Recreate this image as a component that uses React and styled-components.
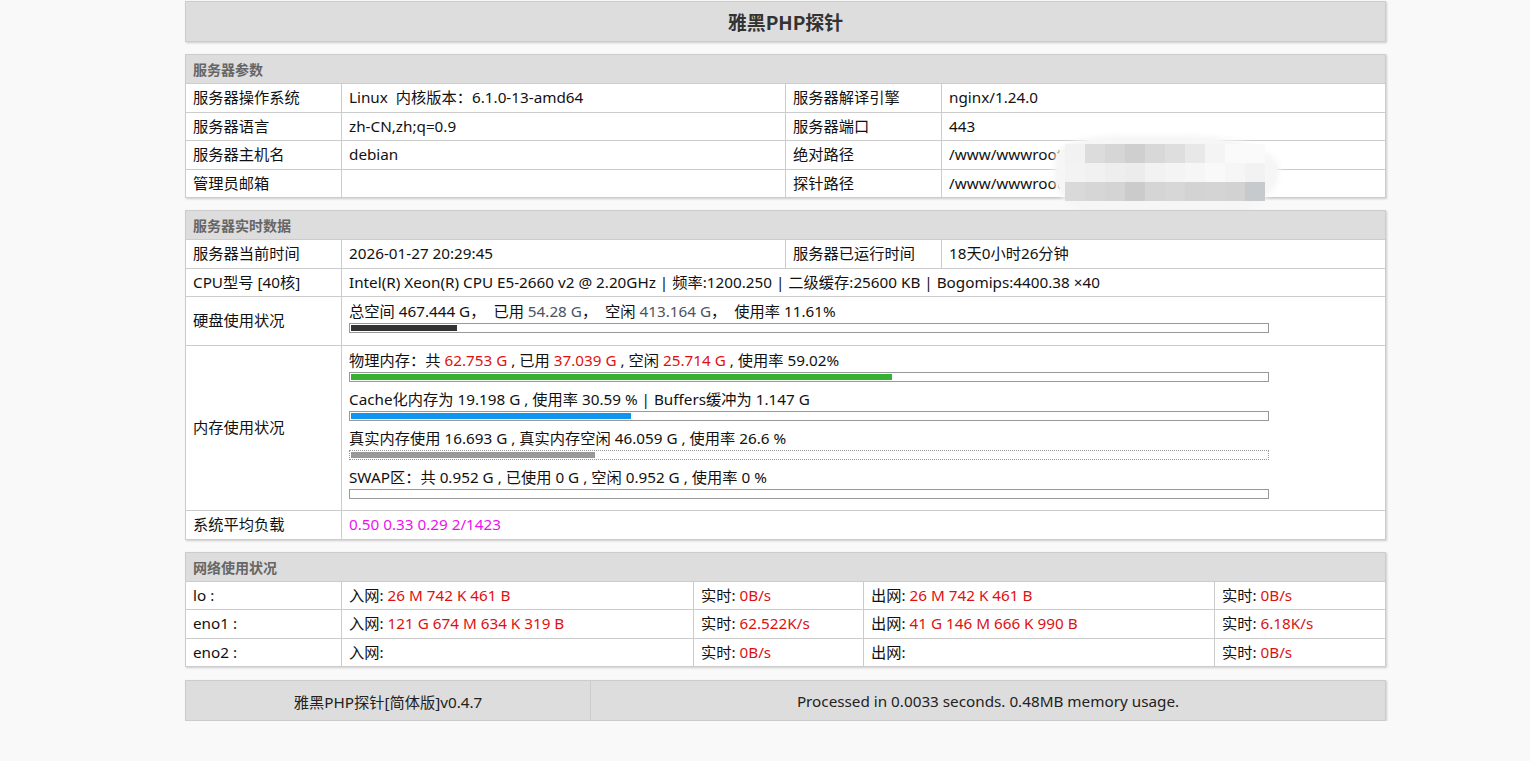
import React from "react";
import styled, { createGlobalStyle } from "styled-components";

const serverRows = [
  ["服务器操作系统", "Linux\u00a0 内核版本：6.1.0-13-amd64", "服务器解译引擎", "nginx/1.24.0"],
  ["服务器语言", "zh-CN,zh;q=0.9", "服务器端口", "443"],
  ["服务器主机名", "debian", "绝对路径", "/www/wwwroot/"],
  ["管理员邮箱", "", "探针路径", "/www/wwwroot/"],
];

const nets = [
  { name: "lo :", rx: "26 M 742 K 461 B", rxRate: "0B/s", tx: "26 M 742 K 461 B", txRate: "0B/s" },
  { name: "eno1 :", rx: "121 G 674 M 634 K 319 B", rxRate: "62.522K/s", tx: "41 G 146 M 666 K 990 B", txRate: "6.18K/s" },
  { name: "eno2 :", rx: "", rxRate: "0B/s", tx: "", txRate: "0B/s" },
];

// mosaic blocks covering the private part of the paths
const mosaic = [
  ["#f2f2f2", "#dcdcdc", "#d6d6d6", "#cfcfcf", "#d8d8d8", "#dedede", "#e8e8e8", "#f4f4f4", "#fafafa", "#fafafa"],
  ["#f3f3f3", "#f1f1f1", "#eeeeee", "#ececec", "#f2f2f2", "#f4f4f4", "#f6f6f6", "#f9f9f9", "#f6f6f6", "#f2f2f2"],
  ["#d9d9d9", "#d6d6d6", "#d4d4d4", "#cbcbcb", "#d5d5d5", "#d7d7d7", "#d3d3d3", "#d4d4d4", "#d2d2d2", "#c6cacd"],
];

const App = () => {
  const memory = [
    {
      key: "phys",
      pct: 59.02,
      color: "#36b233",
      text: (
        <>
          物理内存：共 <Red>62.753 G</Red> , 已用 <Red>37.039 G</Red> , 空闲 <Red>25.714 G</Red> , 使用率 59.02%
        </>
      ),
    },
    {
      key: "cache",
      pct: 30.59,
      color: "#1096ee",
      text: <>Cache化内存为 19.198 G , 使用率 30.59 % | Buffers缓冲为 1.147 G</>,
    },
    {
      key: "real",
      pct: 26.6,
      color: "#999999",
      dotted: true,
      text: <>真实内存使用 16.693 G , 真实内存空闲 46.059 G , 使用率 26.6 %</>,
    },
    {
      key: "swap",
      pct: 0,
      color: "#999999",
      text: <>SWAP区：共 0.952 G , 已使用 0 G , 空闲 0.952 G , 使用率 0 %</>,
    },
  ];

  return (
    <>
      <GlobalStyle />
      <Page>
        <TitleBox>雅黑PHP探针</TitleBox>

        <Panel>
          <Table>
            <colgroup>
              <col style={{ width: 156 }} />
              <col style={{ width: 444 }} />
              <col style={{ width: 156 }} />
              <col />
            </colgroup>
            <tbody>
              <tr>
                <HeadCell colSpan={4}>服务器参数</HeadCell>
              </tr>
              {serverRows.map((r) => (
                <tr key={r[0]}>
                  <Cell>{r[0]}</Cell>
                  <Cell>{r[1]}</Cell>
                  <Cell>{r[2]}</Cell>
                  <Cell>{r[3]}</Cell>
                </tr>
              ))}
            </tbody>
          </Table>
          <Smudge>
            {mosaic.map((row, i) => (
              <MosaicRow key={i}>
                {row.map((c, j) => (
                  <Tile key={j} $shade={c} />
                ))}
              </MosaicRow>
            ))}
          </Smudge>
        </Panel>

        <Panel>
          <Table>
            <colgroup>
              <col style={{ width: 156 }} />
              <col style={{ width: 444 }} />
              <col style={{ width: 156 }} />
              <col />
            </colgroup>
            <tbody>
              <tr>
                <HeadCell colSpan={4}>服务器实时数据</HeadCell>
              </tr>
              <tr>
                <Cell>服务器当前时间</Cell>
                <Cell>2026-01-27 20:29:45</Cell>
                <Cell>服务器已运行时间</Cell>
                <Cell>18天0小时26分钟</Cell>
              </tr>
              <tr>
                <Cell>CPU型号 [40核]</Cell>
                <Cell colSpan={3}>
                  Intel(R) Xeon(R) CPU E5-2660 v2 @ 2.20GHz | 频率:1200.250 | 二级缓存:25600 KB | Bogomips:4400.38 ×40
                </Cell>
              </tr>
              <tr>
                <Cell>硬盘使用状况</Cell>
                <Cell colSpan={3} $tall>
                  <Block $first>
                    总空间 467.444 G，&nbsp; 已用 <Muted>54.28 G</Muted>，&nbsp; 空闲 <Muted>413.164 G</Muted>，&nbsp; 使用率 11.61%
                    <Bar>
                      <Fill $color="#333333" style={{ width: "11.61%" }} />
                    </Bar>
                  </Block>
                </Cell>
              </tr>
              <tr>
                <Cell>内存使用状况</Cell>
                <Cell colSpan={3} $tall>
                  {memory.map((m, i) => (
                    <Block key={m.key} $first={i === 0}>
                      {m.text}
                      <Bar $dotted={m.dotted}>
                        <Fill $color={m.color} style={{ width: `${m.pct}%` }} />
                      </Bar>
                    </Block>
                  ))}
                </Cell>
              </tr>
              <tr>
                <Cell>系统平均负载</Cell>
                <Cell colSpan={3}>
                  <Load>0.50 0.33 0.29 2/1423</Load>
                </Cell>
              </tr>
            </tbody>
          </Table>
        </Panel>

        <Panel>
          <Table>
            <colgroup>
              <col style={{ width: 156 }} />
              <col style={{ width: 352 }} />
              <col style={{ width: 170 }} />
              <col style={{ width: 351 }} />
              <col />
            </colgroup>
            <tbody>
              <tr>
                <HeadCell colSpan={5}>网络使用状况</HeadCell>
              </tr>
              {nets.map((n) => (
                <tr key={n.name}>
                  <Cell>{n.name}</Cell>
                  <Cell>
                    入网: <Red>{n.rx}</Red>
                  </Cell>
                  <Cell>
                    实时: <Red>{n.rxRate}</Red>
                  </Cell>
                  <Cell>
                    出网: <Red>{n.tx}</Red>
                  </Cell>
                  <Cell>
                    实时: <Red>{n.txRate}</Red>
                  </Cell>
                </tr>
              ))}
            </tbody>
          </Table>
        </Panel>

        <Footer>
          <FootCell $w="404px">雅黑PHP探针[简体版]v0.4.7</FootCell>
          <FootCell>Processed in 0.0033 seconds. 0.48MB memory usage.</FootCell>
        </Footer>
      </Page>
    </>
  );
};

export default App;

/* ================== STYLES ================== */

const GlobalStyle = createGlobalStyle`
  html, body {
    margin: 0;
    padding: 0;
    background: #f9f9f9;
  }
  body {
    font-family: "Noto Sans", "Noto Sans CJK SC", sans-serif;
    font-size: 15.25px;
    color: #111;
  }
`;

const Page = styled.div`
  width: 1201px;
  margin-left: 185px;
  padding-top: 1px;
  display: flex;
  flex-direction: column;
  gap: 12px;
`;

const TitleBox = styled.div`
  height: 39px;
  line-height: 39px;
  background: #dddddd;
  border: 1px solid #cccccc;
  box-shadow: 1px 1px 2px rgba(0, 0, 0, 0.18);
  text-align: center;
  font-family: "Noto Sans CJK SC", sans-serif;
  font-size: 19px;
  font-weight: 700;
  color: #333;
`;

const Panel = styled.div`
  position: relative;
  box-shadow: 1px 1px 2px rgba(0, 0, 0, 0.18);
`;

const Table = styled.table`
  width: 100%;
  table-layout: fixed;
  border-collapse: collapse;
  background: #fff;
  border: 1px solid #cccccc;
`;

const HeadCell = styled.td`
  background: #dddddd;
  border: 1px solid #cccccc;
  padding: 4px 8px 4px 7px;
  height: 20px;
  line-height: 20px;
  font-family: "Noto Sans CJK SC", sans-serif;
  font-weight: 700;
  color: #666;
  font-size: 14px;
`;

const Cell = styled.td`
  border: 1px solid #cccccc;
  padding: ${(p) => (p.$tall ? "3px 8px 11.5px 7px" : "4px 8px 4px 7px")};
  height: 19.5px;
  line-height: 19.5px;
  vertical-align: middle;
  white-space: nowrap;
  overflow: hidden;
`;

const Block = styled.div`
  padding-top: ${(p) => (p.$first ? "0" : "6px")};
  line-height: 22px;
`;

const Bar = styled.div`
  width: 916px;
  height: 6px;
  padding: 1px;
  margin-top: 1px;
  border: 1px ${(p) => (p.$dotted ? "dotted" : "solid")} #999;
  background: #fff;
`;

const Fill = styled.div`
  height: 100%;
  background: ${(p) => p.$color};
`;

const Red = styled.span`
  color: #dd1111;
`;

const Muted = styled.span`
  color: #4c5262;
`;

const Load = styled.span`
  color: #ee11ee;
`;

const Footer = styled.div`
  display: flex;
  height: 39px;
  margin-top: 1px;
  background: #dddddd;
  border: 1px solid #cccccc;
  box-shadow: 1px 1px 2px rgba(0, 0, 0, 0.18);
`;

const FootCell = styled.div`
  flex: ${(p) => (p.$w ? `0 0 ${p.$w}` : "1")};
  display: flex;
  align-items: center;
  justify-content: center;
  color: #222;
  & + & {
    border-left: 1px solid #cccccc;
  }
`;

const Smudge = styled.div`
  position: absolute;
  left: 872px;
  top: 84px;
  width: 200px;
  padding: 6px 12px 24px 8px;
  background: #f6f6f6;
  border-radius: 30% 45% 55% 50% / 25% 40% 70% 60%;
  box-shadow: 0 0 5px 3px rgba(246, 246, 246, 0.9);
`;

const MosaicRow = styled.div`
  display: flex;
`;

const Tile = styled.div`
  width: 20px;
  height: 19px;
  background: ${(p) => p.$shade};
`;
